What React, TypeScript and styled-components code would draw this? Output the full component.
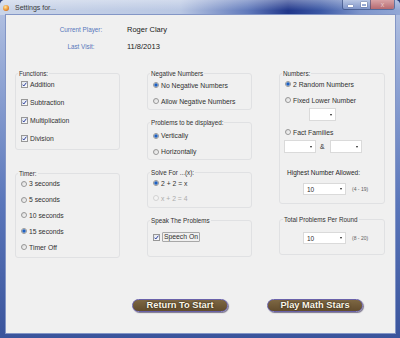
import React from 'react'
import styled, { createGlobalStyle } from 'styled-components'

const GlobalStyle = createGlobalStyle`
  html, body {
    margin: 0;
    padding: 0;
    width: 400px;
    height: 338px;
    overflow: hidden;
  }
  body {
    font-family: 'Liberation Sans', Arial, sans-serif;
    background: #2c3f7c;
  }
  * { box-sizing: border-box; }
`

const Window = styled.div`
  width: 400px;
  height: 338px;
  display: flex;
  flex-direction: column;
  border-radius: 5px 5px 0 0;
  overflow: hidden;
  background: linear-gradient(to bottom, #b6c4e3 0%, #8ea3d3 25%, #5a76ba 60%, #3a549c 100%);
`

const TitleBar = styled.div`
  height: 15px;
  flex: none;
  display: flex;
  align-items: center;
  padding: 0 5px 0 3px;
  gap: 6px;
  background:
    linear-gradient(to bottom, rgba(255,255,255,0.35), rgba(255,255,255,0) 70%),
    linear-gradient(to right, #c9d4e8 0%, #b9c7e3 45%, #6079bb 62%, #20368a 72%, #3a57a4 80%, #7d95cc 90%, #92a7d5 100%);
`

const TitleIcon = styled.span`
  width: 6px;
  height: 6px;
  border-radius: 50%;
  background: radial-gradient(circle at 40% 35%, #ffe7a0, #e88a2a 60%, #a8461a);
`

const TitleText = styled.span`
  flex: 1;
  font-size: 7px;
  color: #3a3a3a;
`

const Caption = styled.div`
  align-self: flex-start;
  display: flex;
  height: 10px;
  border: 1px solid rgba(40, 60, 110, 0.55);
  border-top: none;
  border-radius: 0 0 3px 3px;
  overflow: hidden;
`

const CaptionButton = styled.span<{ $w: number; $close?: boolean }>`
  width: ${p => p.$w}px;
  display: flex;
  align-items: center;
  justify-content: center;
  border-left: ${p => (p.$close ? '1px solid rgba(40,60,110,0.5)' : 'none')};
  background: ${p => p.$close
    ? 'linear-gradient(to bottom, #d9a3a6, #b66a70)'
    : 'linear-gradient(to bottom, #b9c6e4, #7f95c9)'};
  font-size: 7px;
  color: #e8c8c8;
`

const MinGlyph = styled.span`
  width: 5px;
  height: 2px;
  margin-top: 3px;
  background: #fff;
  box-shadow: 0 0 1px #334;
`

const MaxGlyph = styled.span`
  width: 6px;
  height: 5px;
  border: 1px solid #fff;
  border-top-width: 2px;
  box-shadow: 0 0 1px #334;
`

const Frame = styled.div`
  flex: 1;
  display: flex;
  padding: 0 5px 5px 6px;
`

const Client = styled.div`
  flex: 1;
  display: flex;
  flex-direction: column;
  background: #f0f0f0;
  box-shadow: 0 0 0 1px #8396c6;
  color: #303030;
`

const Header = styled.div`
  display: grid;
  grid-template-columns: 70px auto;
  grid-auto-rows: 17px;
  column-gap: 11px;
  align-items: center;
  padding: 6px 0 0 40px;
`

const HeaderLabel = styled.span`
  text-align: center;
  font-size: 6.3px;
  color: #5776bb;
`

const HeaderValue = styled.span`
  font-size: 7.5px;
  color: #202020;
`

const Columns = styled.div`
  display: grid;
  grid-template-columns: 105px 105px 106px;
  column-gap: 27px;
  align-items: start;
  padding-left: 9px;
  margin-top: 18px;
`

const Column = styled.div<{ $gap: number }>`
  display: flex;
  flex-direction: column;
  gap: ${p => p.$gap}px;
`

const Group = styled.div<{ $h: number; $pt: number }>`
  position: relative;
  height: ${p => p.$h}px;
  padding-top: ${p => p.$pt}px;
  border: 1px solid #e0e1e3;
  border-radius: 3px;
  display: flex;
  flex-direction: column;
`

const GroupTitle = styled.span<{ $left?: number }>`
  position: absolute;
  top: -4px;
  left: ${p => p.$left ?? 2}px;
  padding: 0 1px;
  background: #f0f0f0;
  font-size: 6.3px;
  line-height: 8px;
  color: #303030;
  white-space: nowrap;
`

const Option = styled.div<{ $h: number; $off?: boolean }>`
  height: ${p => p.$h}px;
  flex: none;
  display: flex;
  align-items: center;
  gap: 2px;
  padding-left: 5px;
  font-size: 6.8px;
  color: ${p => (p.$off ? '#ababab' : '#303030')};
  white-space: nowrap;
`

const Radio = styled.span<{ $on?: boolean; $off?: boolean }>`
  flex: none;
  width: 6px;
  height: 6px;
  border-radius: 50%;
  border: 1px solid ${p => (p.$off ? '#d2d2d2' : '#979797')};
  background: ${p => p.$on
    ? 'radial-gradient(circle, #1f5fbf 0 1.3px, #79a6e0 1.7px, #e8eef6 2.3px)'
    : p.$off
      ? '#f4f4f4'
      : 'linear-gradient(135deg, #d8d8d8, #fbfbfb)'};
`

const Box = styled.span`
  flex: none;
  width: 7px;
  height: 7px;
  border: 1px solid #979797;
  background: linear-gradient(135deg, #e2e6ee, #fafbfd);
  display: flex;
  align-items: center;
  justify-content: center;
`

const FocusLabel = styled.span`
  border: 1px solid #a8a8a8;
  border-radius: 1px;
  padding: 0 1px;
  line-height: 8px;
`

const Row = styled.div<{ $mt: number; $pl: number; $h: number }>`
  flex: none;
  height: ${p => p.$h}px;
  margin-top: ${p => p.$mt}px;
  padding-left: ${p => p.$pl}px;
  display: flex;
  align-items: center;
  gap: 4px;
`

const Amp = styled.span`
  font-size: 6.8px;
  margin-right: 1px;
`

const FieldLabel = styled.span`
  font-size: 6.5px;
  color: #262626;
  white-space: nowrap;
`

const Select = styled.div<{ $w: number; $h: number }>`
  width: ${p => p.$w}px;
  height: ${p => p.$h}px;
  flex: none;
  display: flex;
  align-items: center;
  justify-content: space-between;
  padding: 0 3px 0 3px;
  background: #fff;
  border: 1px solid #dadada;
  font-size: 6.5px;
  color: #303030;
`

const Arrow = styled.span`
  width: 0;
  height: 0;
  border-left: 1.5px solid transparent;
  border-right: 1.5px solid transparent;
  border-top: 2px solid #222;
`

const Range = styled.span`
  font-size: 5px;
  color: #606060;
  margin-left: 2px;
  white-space: nowrap;
`

const ButtonBar = styled.div`
  margin-top: auto;
  display: flex;
  gap: 39px;
  padding: 0 0 21px 126px;
`

const PillButton = styled.button`
  width: 96px;
  height: 13px;
  padding: 0;
  border-radius: 7px;
  border: 1.5px solid #6a62aa;
  background: linear-gradient(to bottom, #7d6743, #624c2d);
  color: #fbf6e6;
  font-family: 'Liberation Sans', Arial, sans-serif;
  font-weight: bold;
  font-size: 9.3px;
  line-height: 1;
  text-shadow: 0 0 2px rgba(0, 0, 0, 0.8);
  box-shadow: 1px 1px 1px rgba(30, 20, 60, 0.55);
`

const Check = () => (
  <Box>
    <svg width="5" height="5" viewBox="0 0 5 5">
      <path d="M0.6 2.7 L1.8 4 L4.4 0.7" stroke="#2b3f9c" strokeWidth="1" fill="none" />
    </svg>
  </Box>
)

const functions = ['Addition', 'Subtraction', 'Multiplication', 'Division']
const timers = ['3 seconds', '5 seconds', '10 seconds', '15 seconds', 'Timer Off']

function App() {
  return (
    <>
      <GlobalStyle />
      <Window>
        <TitleBar>
          <TitleIcon />
          <TitleText>Settings for...</TitleText>
          <Caption>
            <CaptionButton $w={14}><MinGlyph /></CaptionButton>
            <CaptionButton $w={13}><MaxGlyph /></CaptionButton>
            <CaptionButton $w={24} $close>x</CaptionButton>
          </Caption>
        </TitleBar>
        <Frame>
          <Client>
            <Header>
              <HeaderLabel>Current Player:</HeaderLabel>
              <HeaderValue>Roger Clary</HeaderValue>
              <HeaderLabel>Last Visit:</HeaderLabel>
              <HeaderValue>11/8/2013</HeaderValue>
            </Header>

            <Columns>
              <Column $gap={23}>
                <Group $h={77} $pt={1}>
                  <GroupTitle>Functions:</GroupTitle>
                  {functions.map(f => (
                    <Option key={f} $h={18}><Check />{f}</Option>
                  ))}
                </Group>
                <Group $h={85} $pt={2}>
                  <GroupTitle>Timer:</GroupTitle>
                  {timers.map(t => (
                    <Option key={t} $h={15.8}><Radio $on={t === '15 seconds'} />{t}</Option>
                  ))}
                </Group>
              </Column>

              <Column $gap={12}>
                <Group $h={37} $pt={3}>
                  <GroupTitle>Negative Numbers</GroupTitle>
                  <Option $h={16}><Radio $on />No Negative Numbers</Option>
                  <Option $h={16}><Radio />Allow Negative Numbers</Option>
                </Group>
                <Group $h={38} $pt={5}>
                  <GroupTitle>Problems to be displayed:</GroupTitle>
                  <Option $h={15.7}><Radio $on />Vertically</Option>
                  <Option $h={15.7}><Radio />Horizontally</Option>
                </Group>
                <Group $h={36} $pt={2.5}>
                  <GroupTitle>Solve For ...(x):</GroupTitle>
                  <Option $h={15}><Radio $on />2 + 2 = x</Option>
                  <Option $h={15} $off><Radio $off />x + 2 = 4</Option>
                </Group>
                <Group $h={37} $pt={10}>
                  <GroupTitle>Speak The Problems</GroupTitle>
                  <Option $h={12}><Check /><FocusLabel>Speech On</FocusLabel></Option>
                </Group>
              </Column>

              <Column $gap={15}>
                <Group $h={131} $pt={2}>
                  <GroupTitle>Numbers:</GroupTitle>
                  <Option $h={16}><Radio $on />2 Random Numbers</Option>
                  <Option $h={16}><Radio />Fixed Lower Number</Option>
                  <Row $mt={0} $pl={29} $h={13}>
                    <Select $w={27} $h={13}><span /><Arrow /></Select>
                  </Row>
                  <Row $mt={3} $pl={0} $h={16}>
                    <Option $h={16}><Radio />Fact Families</Option>
                  </Row>
                  <Row $mt={0} $pl={4} $h={13}>
                    <Select $w={32} $h={13}><span /><Arrow /></Select>
                    <Amp>&amp;</Amp>
                    <Select $w={32} $h={13}><span /><Arrow /></Select>
                  </Row>
                  <Row $mt={14} $pl={7} $h={10}>
                    <FieldLabel>Highest Number Allowed:</FieldLabel>
                  </Row>
                  <Row $mt={6} $pl={23} $h={12}>
                    <Select $w={43} $h={12}>10<Arrow /></Select>
                    <Range>(4 - 19)</Range>
                  </Row>
                </Group>
                <Group $h={36} $pt={12}>
                  <GroupTitle $left={3}>Total Problems Per Round</GroupTitle>
                  <Row $mt={0} $pl={23} $h={12}>
                    <Select $w={43} $h={12}>10<Arrow /></Select>
                    <Range>(8 - 20)</Range>
                  </Row>
                </Group>
              </Column>
            </Columns>

            <ButtonBar>
              <PillButton>Return To Start</PillButton>
              <PillButton>Play Math Stars</PillButton>
            </ButtonBar>
          </Client>
        </Frame>
      </Window>
    </>
  )
}

export default App
